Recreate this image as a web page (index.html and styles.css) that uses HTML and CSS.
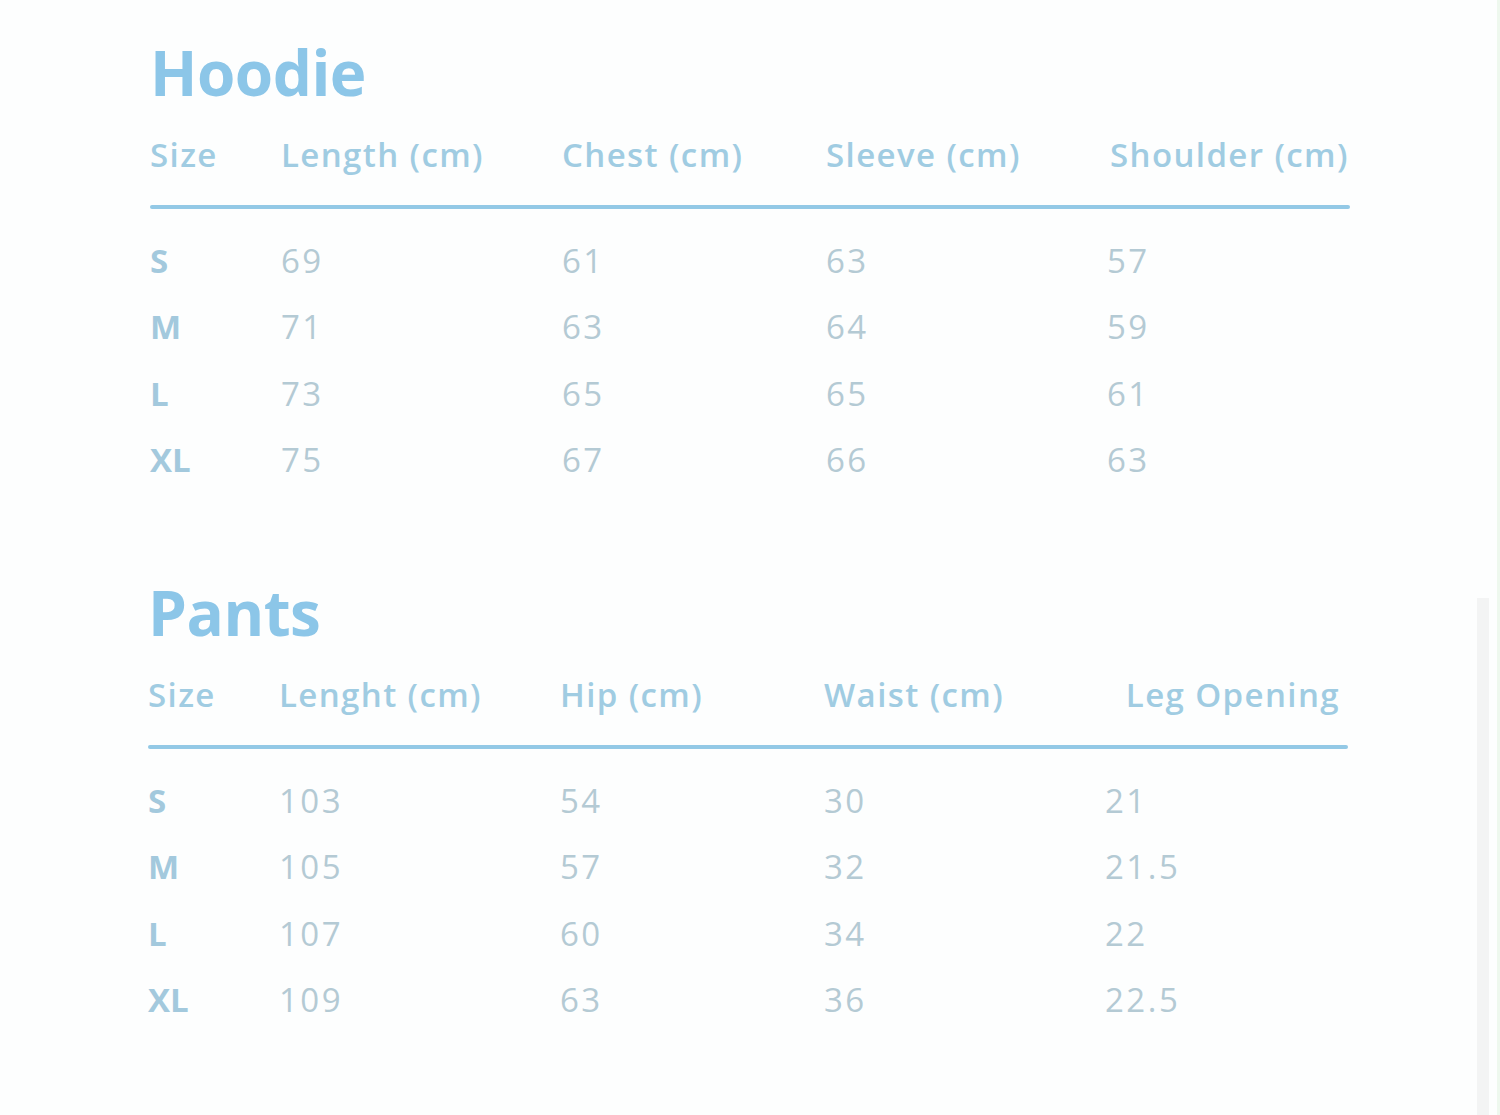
FILE: index.html
```html
<!DOCTYPE html>
<html>
<head>
<meta charset="utf-8">
<link rel="stylesheet" href="styles.css">
</head>
<body>
<div class="page">
  <section class="chart">
    <h1 class="title">Hoodie</h1>
    <div class="row head">
      <span class="c1">Size</span><span class="c2">Length (cm)</span><span class="c3">Chest (cm)</span><span class="c4">Sleeve (cm)</span><span class="c5">Shoulder (cm)</span>
    </div>
    <div class="rule"></div>
    <div class="row data"><span class="c1">S</span><span class="c2">69</span><span class="c3">61</span><span class="c4">63</span><span class="c5">57</span></div>
    <div class="row data"><span class="c1">M</span><span class="c2">71</span><span class="c3">63</span><span class="c4">64</span><span class="c5">59</span></div>
    <div class="row data"><span class="c1">L</span><span class="c2">73</span><span class="c3">65</span><span class="c4">65</span><span class="c5">61</span></div>
    <div class="row data"><span class="c1">XL</span><span class="c2">75</span><span class="c3">67</span><span class="c4">66</span><span class="c5">63</span></div>
  </section>
  <section class="chart pants">
    <h1 class="title">Pants</h1>
    <div class="row head">
      <span class="c1">Size</span><span class="c2">Lenght (cm)</span><span class="c3">Hip (cm)</span><span class="c4">Waist (cm)</span><span class="c5 right">Leg Opening</span>
    </div>
    <div class="rule"></div>
    <div class="row data"><span class="c1">S</span><span class="c2">103</span><span class="c3">54</span><span class="c4">30</span><span class="c5">21</span></div>
    <div class="row data"><span class="c1">M</span><span class="c2">105</span><span class="c3">57</span><span class="c4">32</span><span class="c5">21.5</span></div>
    <div class="row data"><span class="c1">L</span><span class="c2">107</span><span class="c3">60</span><span class="c4">34</span><span class="c5">22</span></div>
    <div class="row data"><span class="c1">XL</span><span class="c2">109</span><span class="c3">63</span><span class="c4">36</span><span class="c5">22.5</span></div>
  </section>
  <div class="edge"></div>
</div>
</body>
</html>
```
FILE: styles.css
```css
html, body {
  margin: 0;
  padding: 0;
  background: #fdfefe;
}
body {
  font-family: "Open Sans", "Noto Sans", sans-serif;
  width: 1500px;
  height: 1115px;
  overflow: hidden;
}
.page {
  position: relative;
  width: 1500px;
  height: 1115px;
  padding-top: 32px;
  box-sizing: border-box;
}
.chart {
  margin-left: 150px;
  width: 1200px;
}
.chart.pants {
  margin-left: 148px;
  margin-top: 79px;
}
.title {
  margin: 0 0 12px 0;
  font-size: 62px;
  line-height: 80px;
  height: 80px;
  font-weight: 700;
  color: #8cc6e8;
  letter-spacing: -0.5px;
}
.row {
  display: grid;
  grid-template-columns: 131px 281px 264px 284px 240px;
  align-items: center;
}
.row.head {
  height: 60px;
  font-size: 33px;
  font-weight: 600;
  color: #a0cce2;
  letter-spacing: 1.4px;
}
.row.head .right {
  text-align: right;
  padding-right: 8px;
}
.rule {
  height: 4px;
  margin-top: 21px;
  margin-bottom: 18px;
  background: #93c9e6;
  border-radius: 2px;
}
.row.data {
  height: 66.5px;
  font-size: 33px;
  font-weight: 400;
  color: #b4cad4;
  letter-spacing: 2.5px;
}
.row.data .c1 {
  font-weight: 700;
  color: #a3c9dd;
  letter-spacing: 0;
}
.row.data .c5 {
  margin-left: -3px;
}
.edge {
  position: absolute;
  left: 1477px;
  top: 598px;
  width: 12px;
  height: 517px;
  background: #f3f4f4;
}
.edge::after {
  content: "";
  position: absolute;
  left: 20px;
  top: -598px;
  width: 3px;
  height: 1115px;
  background: #eef8ee;
}
```
